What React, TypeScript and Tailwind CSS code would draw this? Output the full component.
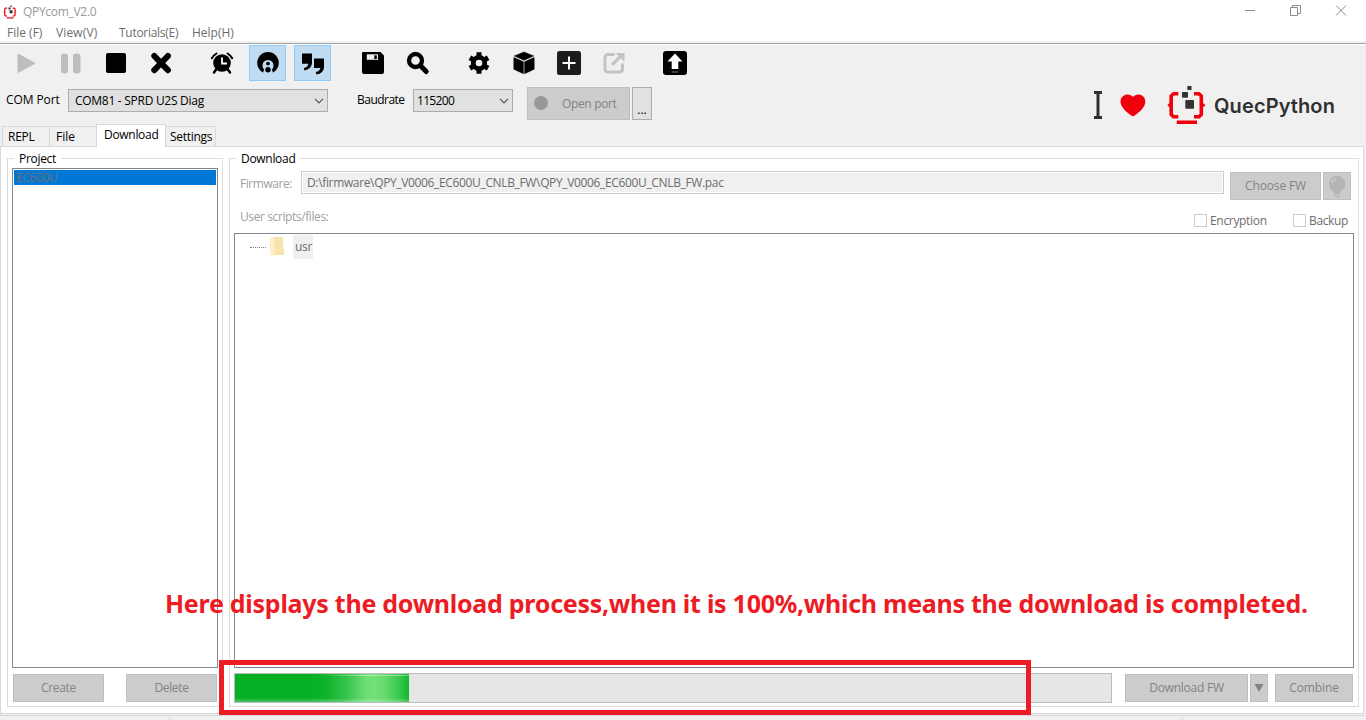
import type { ReactNode } from "react";

function IconBox({ active = false, className = "", children }: { active?: boolean; className?: string; children: ReactNode }) {
  return (
    <button
      className={`flex h-9 w-[37px] shrink-0 items-start justify-center border ${
        active ? "border-[#90c8f6] bg-[#c0dcf3]" : "border-transparent"
      } ${className}`}
    >
      <svg viewBox="0 0 35 34" className="h-[34px] w-[35px]">
        {children}
      </svg>
    </button>
  );
}

function Toolbar() {
  return (
    <div className="flex h-9 pl-2">
      <IconBox>
        <path d="M9 8v18.500L26 17.300z" fill="#bdbdbd" stroke="#bdbdbd" strokeLinejoin="round" />
      </IconBox>
      <IconBox className="ml-2">
        <rect x="7" y="7.500" width="7" height="20" rx="3" fill="#bdbdbd" />
        <rect x="19" y="7.500" width="7.500" height="20" rx="3" fill="#bdbdbd" />
      </IconBox>
      <IconBox className="ml-2">
        <rect x="7" y="7" width="20" height="20" rx="2" />
      </IconBox>
      <IconBox className="ml-2">
        <path d="M10.300 10l13.600 14.200M23.900 10L10.300 24.200" stroke="#000" strokeWidth="6" strokeLinecap="round" />
      </IconBox>
      <IconBox className="ml-[23px]">
        <circle cx="18" cy="17" r="8.800" />
        <path d="M12.500 23l-2.500 3.500M23.500 23l2.500 3.500" stroke="#000" strokeWidth="2.500" strokeLinecap="round" />
        <path d="M7.800 12.300a12 12 0 0 1 4.700-4.800M28.200 12.300a12 12 0 0 0-4.700-4.800" stroke="#000" strokeWidth="2" fill="none" strokeLinecap="round" />
        <path d="M18 11.500v6h5" stroke="#fff" strokeWidth="1.800" fill="none" />
      </IconBox>
      <IconBox active className="ml-[9px]">
        <circle cx="18" cy="16.800" r="10.800" />
        <circle cx="18" cy="19.500" r="5.500" fill="#c0dcf3" />
        <path d="M12.500 29l1.500-5.500h8l1.500 5.500z" fill="#c0dcf3" />
        <circle cx="18" cy="17.600" r="1.900" />
        <circle cx="18" cy="23.800" r="2.700" />
      </IconBox>
      <IconBox active className="ml-2">
        <path d="M7 7.500h10v9.800q-.7 6-7.500 7.200l-.8-2.500q4.300-.8 4.600-4.300H7zM19 12.500h10v9.300q-.7 6-7.500 6.700l-.8-2.500q4.300-.8 4.600-4H19z" />
      </IconBox>
      <IconBox className="ml-[23px]">
        <path d="M7.500 6h18l3.500 3.500V26q0 2-2 2H9q-2 0-2-2V6.500z" />
        <path d="M11.800 8.300h11.200v5.500H11.800z" fill="#efefef" />
        <path d="M19.300 9.300h2.500v3.700h-2.500z" />
      </IconBox>
      <IconBox className="ml-2">
        <circle cx="15.500" cy="14.500" r="6.500" fill="none" stroke="#000" strokeWidth="4.300" />
        <path d="M20.500 19.800l5.700 5.700" stroke="#000" strokeWidth="5" strokeLinecap="round" />
      </IconBox>
      <IconBox className="ml-[24px]">
        <circle cx="18" cy="17" r="5.700" fill="none" stroke="#000" strokeWidth="4.800" />
        <path d="M18 6.300v4M18 23.700v4M8.900 11.750l3.500 2M23.600 20.250l3.500 2M27.100 11.750l-3.500 2M12.400 20.250l-3.500 2" stroke="#000" strokeWidth="5" />
      </IconBox>
      <IconBox className="ml-2">
        <path d="M18 6l9.700 3.900-9.700 4.300-9.700-4.300zM7.800 11.500l9.600 4.200v12L7.800 23.200zM28.200 11.500l-9.600 4.200v12l9.600-4.500z" stroke="#000" strokeWidth=".5" strokeLinejoin="round" />
      </IconBox>
      <IconBox className="ml-2">
        <rect x="6" y="5" width="24" height="24" rx="2.500" fill="#1c1c1c" />
        <path d="M18 10.500v13M11.500 17h13" stroke="#fff" strokeWidth="2" />
      </IconBox>
      <IconBox className="ml-2">
        <path d="M17.500 8.500h-5q-3.500 0-3.500 3v11.500q0 3 3.500 3H23q3.500 0 3.500-3V18.500" stroke="#c3c3c3" strokeWidth="3" fill="none" strokeLinecap="round" />
        <path d="M16 18.800l8-8" stroke="#c3c3c3" strokeWidth="3.200" />
        <path d="M19.500 7h9v9z" fill="#c3c3c3" />
      </IconBox>
      <IconBox className="ml-[24px]">
        <rect x="6" y="5" width="24" height="24" rx="3" />
        <path d="M18 7.500l7.500 8h-4.200v7.500h-6.600v-7.500H10.500z" fill="#fff" />
        <path d="M14.700 26h6.600" stroke="#555" strokeWidth="1.500" />
      </IconBox>
    </div>
  );
}

function BracketMark({ className }: { className: string }) {
  return (
    <svg viewBox="0 0 41 40" className={className}>
      <path d="M12.300 8.800H7.500L5.200 11v18.500l2.300 2.200h4.800M28 8.800h5l2.300 2.200v18.500L33 31.700h-5" fill="none" stroke="#f1000b" strokeWidth="3.600" strokeLinejoin="round" />
      <path d="M4 17.500L1.300 20.200 4 22.800zM36.500 17.500l3 2.700-3 2.600z" fill="#f1000b" />
      <path d="M10.700 35.500h20.300v3.500H10.700z" fill="#f1000b" />
      <rect x="19.300" y="15" width="8.700" height="8.700" rx=".8" fill="#333" />
      <rect x="16" y="7" width="6" height="5.700" rx=".6" fill="#333" />
      <rect x="21.300" y="1" width="4.200" height="4" rx=".5" fill="#333" />
    </svg>
  );
}

function Brand() {
  return (
    <div className="flex h-10 items-start text-[#303030]">
      <svg viewBox="0 0 10 40" className="h-10 w-[10px]">
        <path d="M1 6h8v3H6.500v22H9v3H1v-3h2.500V9H1z" fill="#303030" />
      </svg>
      <svg viewBox="0 0 26 40" className="ml-[17px] h-10 w-[26px]">
        <path d="M13 12C10.500 8 1 8 .5 16.500 .3 22.500 8 28.500 13 31.500 18 28.500 25.500 22.500 25.300 16.500 25 8 15.500 8 13 12z" fill="#f1000b" />
      </svg>
      <BracketMark className="ml-[20px] h-10 w-[41px]" />
      <span className="ml-[7px] mt-[9px] whitespace-nowrap font-['Inter',sans-serif] text-[20px] font-semibold leading-6 tracking-[0.1px]">
        QuecPython
      </span>
    </div>
  );
}

function Chevron() {
  return (
    <svg viewBox="0 0 10 6" className="mr-[3px] h-[6px] w-[10px] shrink-0">
      <path d="M1 .8l4 4 4-4" fill="none" stroke="#555" strokeWidth="1.200" />
    </svg>
  );
}

function Combo({ text, className }: { text: string; className: string }) {
  return (
    <div className={`flex h-[23px] shrink-0 items-center justify-between border border-[#adadad] bg-[#e1e1e1] ${className}`}>
      <span>{text}</span>
      <Chevron />
    </div>
  );
}

function Disabled({ className, children }: { className: string; children: ReactNode }) {
  return (
    <button disabled className={`flex h-7 shrink-0 items-center justify-center whitespace-nowrap border border-[#bfbfbf] bg-[#cccccc] text-[#838383] ${className}`}>
      {children}
    </button>
  );
}

function Group({ title, className, children }: { title: string; className: string; children: ReactNode }) {
  return (
    <section className={`flex h-[549px] shrink-0 flex-col border border-[#dcdcdc] ${className}`}>
      <h2 className="-mt-[9px] ml-[6px] h-[18px] self-start bg-white px-[5px] leading-[18px] tracking-[-0.3px]">{title}</h2>
      {children}
    </section>
  );
}

function CheckItem({ label, className = "" }: { label: string; className?: string }) {
  return (
    <label className={`flex items-center text-[#6d6d6d] ${className}`}>
      <span className="h-[13px] w-[13px] border border-[#cccccc] bg-white" />
      <span className="ml-[3px] mt-px">{label}</span>
    </label>
  );
}

function ProjectPanel() {
  return (
    <Group title="Project" className="w-[216px]">
      <div className="ml-1 h-[500px] w-[206px] border border-[#828790] p-px">
        <div className="h-[15px] bg-[#0078d7] pl-[2px] leading-[16px] tracking-[-0.43px] text-[#6d6d6d]">EC600U</div>
      </div>
      <div className="ml-[5px] mt-[6px] flex justify-between pr-[5px]">
        <Disabled className="w-[91px] tracking-[-0.3px]">Create</Disabled>
        <Disabled className="w-[91px] tracking-[-0.35px]">Delete</Disabled>
      </div>
    </Group>
  );
}

function DownloadPanel() {
  return (
    <Group title="Download" className="ml-[6px] w-[1130px]">
      <div className="flex h-[36px] items-start">
        <span className="ml-[10px] mt-[7px] w-[61px] leading-[18px] tracking-[-0.44px] text-[#a0a0a0]">Firmware:</span>
        <div className="mt-[3px] h-[23px] w-[923px] border border-[#cccccc] bg-white p-px">
          <div className="h-full bg-[#f0f0f0] pl-1 leading-[19px] tracking-[-0.35px] text-[#6d6d6d]">
            {"D:\\firmware\\QPY_V0006_EC600U_CNLB_FW\\QPY_V0006_EC600U_CNLB_FW.pac"}
          </div>
        </div>
        <Disabled className="ml-[6px] mt-[4px] w-[91px] tracking-[-0.15px]">Choose FW</Disabled>
        <Disabled className="ml-[2px] mt-[4px] w-[28px]">
          <svg viewBox="0 0 20 24" className="h-6 w-5">
            <circle cx="10" cy="10" r="8.200" fill="#b5b5b5" />
            <path d="M5 15h10l-2.500 5h-5z" fill="#b5b5b5" />
            <path d="M4.700 9a5 5 0 0 1 4-4" stroke="#ccc" strokeWidth="1.500" fill="none" />
            <path d="M6.500 21h7M7.500 23h5" stroke="#b5b5b5" strokeWidth="1" />
          </svg>
        </Disabled>
      </div>
      <div className="flex h-[29px] items-center pr-[9px]">
        <span className="ml-[10px] -mt-[4px] grow tracking-[-0.4px] text-[#a0a0a0]">User scripts/files:</span>
        <CheckItem label="Encryption" className="mt-[4px] w-[99px] tracking-[-0.32px]" />
        <CheckItem label="Backup" className="mt-[4px] w-[56px] tracking-[-0.35px]" />
      </div>
      <div className="ml-1 h-[435px] w-[1120px] border border-[#828790]">
        <div className="flex h-6 items-center pl-[15px] pt-[2px]">
          <span className="w-4 border-t border-dotted border-[#808080]" />
          <svg viewBox="0 0 16 22" className="ml-1 h-[22px] w-4">
            <path d="M3 1h10v18H4z" fill="#f9e3ac" />
            <path d="M12 13l2 .3V19h-3z" fill="#f9e3ac" />
            <path d="M0 1l4.500 2.500v18L0 18z" fill="#fff0c8" />
          </svg>
          <span className="ml-[7px] h-6 w-5 bg-[#f0f0f0] pl-[2px] leading-[24px] tracking-[-0.3px] text-[#6d6d6d]">usr</span>
        </div>
      </div>
      <div className="ml-1 mt-[5px] flex items-start">
        <div className="h-[30px] w-[878px] border border-[#bcbcbc] bg-[#e6e6e6]">
          <div className="flex h-full w-[174px] flex-col justify-between bg-[linear-gradient(90deg,#06b025_0%,#06b025_44%,#0fb42c_53%,#36c34d_64%,#6cdd72_75%,#72e178_80%,#66da6c_86%,#35c84c_95%,#10b52e_100%)]">
            <span className="mt-px h-px bg-[linear-gradient(90deg,transparent_48%,rgba(255,255,255,0.45)_75%,rgba(255,255,255,0.35)_100%)]" />
            <span className="h-[4px] bg-[linear-gradient(0deg,rgba(255,255,255,0.28),transparent)]" />
          </div>
        </div>
        <Disabled className="ml-[13px] mt-px w-[123px] tracking-[-0.25px]">Download FW</Disabled>
        <Disabled className="ml-[2px] mt-px w-[18px]">
          <svg viewBox="0 0 10 8" className="h-2 w-[10px]">
            <path d="M.5 0h9L5 8z" fill="#838383" />
          </svg>
        </Disabled>
        <Disabled className="ml-[7px] mt-px w-[78px] tracking-[-0.1px]">Combine</Disabled>
      </div>
    </Group>
  );
}

function Tabs() {
  return (
    <div className="flex h-[22px] shrink-0 items-end pl-[2px]">
      <div className="h-[20px] w-[48px] border border-b-0 border-[#d9d9d9] pl-[5px] leading-[20px] tracking-[-0.25px]">REPL</div>
      <div className="h-[20px] w-[46px] border border-x-0 border-b-0 border-[#d9d9d9] pl-[6px] leading-[20px]">File</div>
      <div className="z-10 -mb-px h-[23px] w-[70px] border border-b-0 border-[#d9d9d9] bg-white pl-[7px] leading-[20px] tracking-[-0.3px]">Download</div>
      <div className="h-[20px] w-[50px] border border-b-0 border-l-0 border-[#d9d9d9] pl-[4px] leading-[20px] tracking-[-0.3px]">Settings</div>
    </div>
  );
}

export default function App() {
  return (
    <div className="relative flex h-[720px] w-[1366px] flex-col overflow-hidden bg-[#f0f0f0] font-['Open_Sans',sans-serif] text-[12px] leading-4 text-black">
      <header className="flex h-[23px] shrink-0 items-center bg-white">
        <BracketMark className="ml-[3px] h-[14px] w-[14px]" />
        <span className="ml-[6px] grow leading-[23px] tracking-[-0.3px] text-[#999999]">QPYcom_V2.0</span>
        <svg viewBox="0 0 104 12" className="mb-[4px] mr-[18px] h-3 w-[104px]" fill="none" stroke="#8c8c8c">
          <path d="M1 6.500h10M46.500 3.500h7v8h-7zM48.500 3.500v-2h8v8h-3M92 1.500l10 10M102 1.500l-10 10" />
        </svg>
      </header>
      <nav className="flex h-[18px] shrink-0 items-center bg-white pl-[7px] pt-[2px] text-[#6d6d6d]">
        <span className="w-[49px] tracking-[0px]">File (F)</span>
        <span className="w-[63px] tracking-[0.15px]">View(V)</span>
        <span className="w-[73px] tracking-[-0.28px]">Tutorials(E)</span>
        <span>Help(H)</span>
      </nav>
      <div className="h-[4px] shrink-0 border-b border-white">
        <div className="mt-[2px] h-px bg-[#a0a0a0]" />
      </div>

      <div className="h-9 shrink-0">
        <Toolbar />
      </div>
      <div className="flex h-[43px] shrink-0 items-start whitespace-nowrap">
        <span className="ml-[6px] mt-[11px] w-[62px] tracking-[-0.1px]">COM Port</span>
        <Combo text="COM81 - SPRD U2S Diag" className="mt-2 w-[260px] pl-[6px] tracking-[-0.28px]" />
        <span className="ml-[29px] mt-[11px] w-14 tracking-[-0.52px]">Baudrate</span>
        <Combo text="115200" className="mt-2 w-[100px] pl-[3px] tracking-[-0.68px]" />
        <button disabled className="ml-[14px] mt-[6px] flex h-[33px] w-[103px] items-center border border-[#bfbfbf] bg-[#cccccc] text-[#838383]">
          <span className="ml-[6px] mb-px h-[14px] w-[14px] rounded-full bg-[#999999]" />
          <span className="ml-[14px] mt-px tracking-[-0.35px]">Open port</span>
        </button>
        <button className="ml-[2px] mt-[6px] h-[33px] w-[20px] border border-[#adadad] bg-[#e1e1e1] pt-[12px]">...</button>
        <div className="ml-auto mr-[31px] mt-[4px]">
          <Brand />
        </div>
      </div>

      <Tabs />
      <main className="flex h-[568px] w-[1364px] shrink-0 items-start whitespace-nowrap border border-[#d9d9d9] bg-white pl-[6px] pt-[11px]">
        <ProjectPanel />
        <DownloadPanel />
      </main>
      <footer className="mt-px flex h-[5px] border-t border-[#d7d7d7] pt-px">
        <span className="w-[170px] border-r border-[#d7d7d7]" />
        <span className="w-[1013px] border-r border-[#d7d7d7]" />
      </footer>

      <p className="absolute left-[165px] top-[586px] z-20 whitespace-nowrap font-['Noto_Sans',sans-serif] text-[25px] font-bold leading-[34px] tracking-[-0.265px] text-[#ed1c24]">
        Here displays the download process,when it is 100%,which means the download is completed.
      </p>
      <div className="absolute left-[219px] top-[660px] z-20 h-[55px] w-[812px] border-[5px] border-[#ed1c24]" />
    </div>
  );
}
